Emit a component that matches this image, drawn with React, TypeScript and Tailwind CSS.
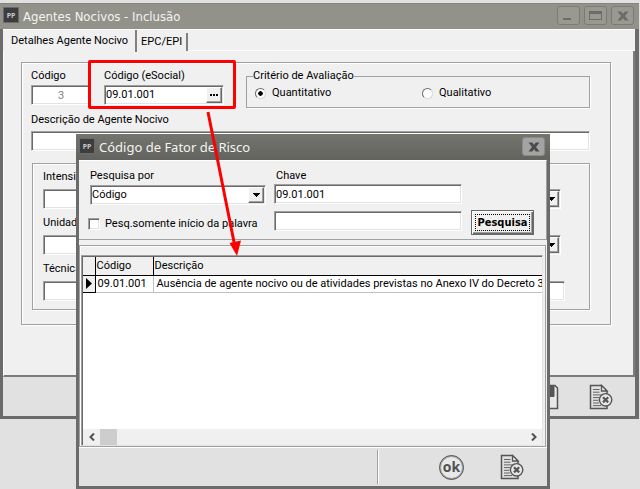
import type { ReactNode } from "react";

const sunken =
  "border border-t-[#a0a0a0] border-l-[#a0a0a0] border-r-white border-b-white bg-white shadow-[inset_1px_1px_0_#696969,inset_-1px_-1px_0_#e3e3e3]";
const raised =
  "border border-t-white border-l-white border-r-[#696969] border-b-[#696969] bg-[#f0f0f0] shadow-[inset_-1px_-1px_0_#a0a0a0]";
const etched = "border border-[#a0a0a0] shadow-[1px_1px_0_#fff,inset_1px_1px_0_#fff]";

function AppIcon() {
  return (
    <span
      aria-hidden="true"
      className="flex size-4 shrink-0 items-center justify-center border border-[#6a6a6a] bg-[#3d3d3f] font-['Noto_Sans'] text-[7px] leading-none font-bold text-[#c8c8c8]"
    >
      PP
    </span>
  );
}

function CloseGlyph() {
  return (
    <svg viewBox="0 0 12 10" className="h-2.5 w-3" fill="currentColor" aria-hidden="true">
      <path d="M0.5 0.5H4.2L6 2.8L7.8 0.5H11.5L8 5L11.5 9.5H7.8L6 7.2L4.2 9.5H0.5L4 5Z" />
    </svg>
  );
}

function TitleButton({ label, className, children }: { label: string; className: string; children: ReactNode }) {
  return (
    <button
      type="button"
      aria-label={label}
      className={"flex h-[19px] w-[23px] items-center justify-center rounded-[3px] border " + className}
    >
      {children}
    </button>
  );
}

function ComboArrow() {
  return (
    <span aria-hidden="true" className={"pointer-events-none flex w-4 shrink-0 items-center justify-center " + raised}>
      <svg viewBox="0 0 7 4" className="h-1 w-[7px]" shapeRendering="crispEdges">
        <path d="M0 0H7L3.5 4Z" />
      </svg>
    </span>
  );
}

function Combo({ id, options }: { id: string; options: string[] }) {
  return (
    <div className={"flex h-5 p-px " + sunken}>
      <select id={id} className="min-w-0 flex-1 appearance-none bg-transparent outline-none">
        {options.map((o) => (
          <option key={o}>{o}</option>
        ))}
      </select>
      <ComboArrow />
    </div>
  );
}

function CancelIcon() {
  return (
    <svg viewBox="0 0 24 26" className="h-[26px] w-6" fill="none" stroke="#555" aria-hidden="true">
      <path d="M12.5 1.5H1.5V24.5H18V22M12.5 1.5L18 7V10" strokeWidth="1.5" />
      <path d="M12.5 1.5V7H18Z" fill="#f2f2f2" strokeWidth="1.3" />
      <path d="M4 5.5H10.5M4 8.2H10.5M4 10.9H13M4 13.6H10.5M4 16.3H9.5M4 19H10M4 21.6H12" strokeWidth="0.9" />
      <circle cx="16.6" cy="15.8" r="6.2" fill="#e8e8e8" strokeWidth="1.4" />
      <path d="M14 13.2L19.2 18.4M19.2 13.2L14 18.4" strokeWidth="2.2" />
    </svg>
  );
}

function SaveIcon() {
  return (
    <svg viewBox="0 0 24 26" className="h-[26px] w-6" fill="none" stroke="#555" aria-hidden="true">
      <path d="M1.5 1.5H20L22.5 4V24.5H1.5Z" fill="#e8e8e8" strokeWidth="1.5" />
      <path d="M6 2H19V12.5H6Z" fill="#555" />
    </svg>
  );
}

function AgentWindow() {
  return (
    <section className="absolute top-[3px] right-px left-0 border-x-[3px] border-r-4 border-b-[3px] border-[#6b6b6b] bg-[#f0f0f0]">
      <header className="-mr-1 -ml-[3px] flex h-[26px] bg-[#92928b] px-[3px] pt-1 shadow-[inset_0_1px_0_#84847e]">
        <AppIcon />
        <h1 className="flex-1 pl-1 font-['DejaVu_Sans_Condensed'] text-[13px] leading-[19px] text-[#f4f4f0]">
          Agentes Nocivos - Inclusão
        </h1>
        <div className="-mt-px flex gap-1 pr-0.5">
          <TitleButton label="Minimizar" className="border-[#7b7b75] bg-[#999992] text-[#6d6d68]">
            <svg viewBox="0 0 12 10" className="h-2.5 w-3" fill="currentColor" aria-hidden="true">
              <path d="M0 7H8V9H0Z" />
            </svg>
          </TitleButton>
          <TitleButton label="Maximizar" className="border-[#7b7b75] bg-[#999992] text-[#6d6d68]">
            <svg viewBox="0 0 13 9" className="h-[9px] w-[13px]" fill="currentColor" aria-hidden="true">
              <path fillRule="evenodd" d="M0 0H13V9H0ZM1 3V8H12V3Z" />
            </svg>
          </TitleButton>
          <TitleButton label="Fechar" className="border-[#7b7b75] bg-[#999992] text-[#6d6d68]">
            <CloseGlyph />
          </TitleButton>
        </div>
      </header>

      <div role="tablist" className="flex h-[22px] items-start border-t border-white">
        <button
          type="button"
          role="tab"
          aria-selected="true"
          className="h-[22px] border-r-2 border-[#808080] pr-[7px] pb-px pl-2"
        >
          Detalhes Agente Nocivo
        </button>
        <button
          type="button"
          role="tab"
          aria-selected="false"
          className="mt-[3px] h-[18px] border-r-2 border-[#808080] px-1"
        >
          EPC/EPI
        </button>
        <div className="h-[21px] flex-1 border-b border-white" />
      </div>

      <div className="h-[326px] border-r-2 border-b-2 border-l border-l-white border-r-[#7c7c7c] border-b-[#7c7c7c] pt-[11px] pr-[22px] pl-[17px]">
        <div className={"pt-1.5 pr-5 pb-3.5 pl-[9px] " + etched}>
          <div className="flex">
            <div className="w-[60px]">
              <label htmlFor="codigo" className="mb-0.5 block">
                Código
              </label>
              <input
                id="codigo"
                defaultValue="3"
                readOnly
                className={"h-5 w-full text-center text-[#808080] outline-none " + sunken}
              />
            </div>
            <div className="ml-[13px] w-[120px]">
              <label htmlFor="esocial" className="mb-0.5 block">
                Código (eSocial)
              </label>
              <div className={"flex h-5 p-px " + sunken}>
                <input
                  id="esocial"
                  defaultValue="09.01.001"
                  className="min-w-0 flex-1 bg-transparent outline-none"
                />
                <button
                  type="button"
                  aria-label="Pesquisar código"
                  className={"flex w-4 items-center justify-center " + raised}
                >
                  <svg viewBox="0 0 8 2" className="h-0.5 w-2" aria-hidden="true">
                    <path d="M0 0H2V2H0ZM3 0H5V2H3ZM6 0H8V2H6Z" />
                  </svg>
                </button>
              </div>
            </div>
            <fieldset className="ml-[22px] h-[39px] flex-1 border border-[#a0a0a0] pl-2 shadow-[1px_1px_0_#fff]">
              <legend className="-ml-0.5">Critério de Avaliação</legend>
              <div className="grid grid-cols-2 pt-[3px]">
                <label className="flex items-center gap-1.5">
                  <input
                    type="radio"
                    name="criterio"
                    defaultChecked
                    className="size-[11px] appearance-none rounded-full border border-t-[#696969] border-l-[#696969] border-r-[#d8d8d8] border-b-[#d8d8d8] bg-white bg-[radial-gradient(circle,#000_2px,transparent_2.5px)]"
                  />
                  Quantitativo
                </label>
                <label className="flex items-center gap-1.5">
                  <input
                    type="radio"
                    name="criterio"
                    className="size-[11px] appearance-none rounded-full border border-t-[#696969] border-l-[#696969] border-r-[#d8d8d8] border-b-[#d8d8d8] bg-white"
                  />
                  Qualitativo
                </label>
              </div>
            </fieldset>
          </div>

          <label htmlFor="descricao" className="mt-[5px] mb-1 block">
            Descrição de Agente Nocivo
          </label>
          <input id="descricao" className={"block h-5 w-full outline-none " + sunken} />

          <div className={"mt-3 ml-px flex flex-col gap-[7px] pt-1.5 pr-6 pb-2 pl-2.5 " + etched}>
            <div className="pr-1">
              <label htmlFor="intensidade" className="mb-[5px] block">
                Intensidade
              </label>
              <Combo id="intensidade" options={[""]} />
            </div>
            <div className="pr-1">
              <label htmlFor="unidade" className="mb-[5px] block">
                Unidade
              </label>
              <Combo id="unidade" options={[""]} />
            </div>
            <div>
              <label htmlFor="tecnica" className="mb-[5px] block">
                Técnica
              </label>
              <input id="tecnica" className={"block h-5 w-full outline-none " + sunken} />
            </div>
          </div>
        </div>
      </div>

      <footer className="flex h-[39px] items-center justify-end gap-[30px] bg-[#e1e1e1] pr-[22px]">
        <button type="button" aria-label="Gravar">
          <SaveIcon />
        </button>
        <button type="button" aria-label="Cancelar">
          <CancelIcon />
        </button>
      </footer>
    </section>
  );
}

function RiskDialog() {
  return (
    <section
      role="dialog"
      aria-labelledby="risk-title"
      className="absolute top-[134px] right-[90px] left-[76px] border-x-[3px] border-b-[3px] border-[#6b6b6b] bg-[#f0f0f0]"
    >
      <header className="-mx-[3px] flex h-[26px] bg-linear-to-b from-[#74756f] to-[#62635e] px-[3px] pt-1">
        <AppIcon />
        <h2
          id="risk-title"
          className="flex-1 pl-1 font-['Noto_Sans'] text-[13px] leading-[19px] text-[#f4f4f0]"
        >
          Código de Fator de Risco
        </h2>
        <TitleButton label="Fechar" className="-mt-px mr-0.5 border-[#8a8a8a] bg-[#a3a3a3] text-[#4a4a4a]">
          <CloseGlyph />
        </TitleButton>
      </header>

      <form className="flex h-20 border-t border-r border-b border-t-white border-r-[#a0a0a0] border-b-[#a0a0a0] pt-2 pl-[11px]">
        <div className="w-44">
          <label htmlFor="por" className="mb-0.5 block">
            Pesquisa por
          </label>
          <Combo id="por" options={["Código", "Descrição"]} />
          <label className="mt-3 -ml-0.5 flex items-center gap-[5px] whitespace-nowrap">
            <input type="checkbox" className={"size-3 appearance-none " + sunken} />
            Pesq.somente início da palavra
          </label>
        </div>
        <div className="ml-2 flex-1">
          <label htmlFor="chave" className="mb-px block pl-0.5">
            Chave
          </label>
          <input id="chave" defaultValue="09.01.001" className={"block h-5 w-full pl-px outline-none " + sunken} />
          <input aria-label="Chave final" className={"mt-[7px] block h-5 w-full outline-none " + sunken} />
        </div>
        <button
          type="button"
          className="mt-[41px] mr-3 ml-[9px] h-[25px] w-[63px] border border-[#696969] bg-[#f0f0f0] p-[3px] font-['DejaVu_Sans_Condensed'] font-bold shadow-[inset_1px_1px_0_#fff,inset_-1px_-1px_0_#696969,inset_-2px_-2px_0_#a0a0a0]"
        >
          <span className="flex h-full items-center justify-center border border-dotted border-black">Pesquisa</span>
        </button>
      </form>

      <div className="mt-[5px] mr-px border border-[#a0a0a0] pt-[9px] pr-0.5 pl-px shadow-[inset_1px_1px_0_#fff]">
        <div className="flex h-[191px] flex-col border border-t-[#a0a0a0] border-l-[#a0a0a0] border-r-[#e3e3e3] border-b-[#e3e3e3] bg-white pt-px pl-px shadow-[inset_1px_1px_0_#696969]">
          <div className="flex-1 overflow-hidden">
            <table className="w-full table-fixed border-collapse text-left whitespace-nowrap">
              <thead className="bg-[#f0f0f0]">
                <tr className="h-[18px] border-b border-black">
                  <th className="w-3 border-r border-black" aria-label="Registro" />
                  <th className="w-[58px] border-r border-black p-0 pl-px font-normal">Código</th>
                  <th className="p-0 pl-px font-normal">Descrição</th>
                </tr>
              </thead>
              <tbody>
                <tr className="h-[17px] border-b border-[#c0c0c0]">
                  <td className="border-r border-b border-black bg-[#f0f0f0] p-0">
                    <svg viewBox="0 0 6 11" className="ml-[3px] block h-[11px] w-1.5" aria-hidden="true">
                      <path d="M0 0L6 5.5L0 11Z" />
                    </svg>
                  </td>
                  <td className="border-r border-[#c0c0c0] p-0 pl-0.5">09.01.001</td>
                  <td className="overflow-hidden p-0 pl-[3px]">
                    Ausência de agente nocivo ou de atividades previstas no Anexo IV do Decreto 3.048/1999
                  </td>
                </tr>
              </tbody>
            </table>
          </div>
          <div className="flex h-4 items-center bg-[#f0f0f0] text-[#505050]">
            <button type="button" aria-label="Rolar para a esquerda" className="flex w-[17px] justify-center">
              <svg viewBox="0 0 6 8" className="h-2 w-1.5" fill="none" stroke="currentColor" strokeWidth="2">
                <path d="M5 0.5L1.5 4L5 7.5" />
              </svg>
            </button>
            <div className="h-full w-[17px] bg-[#cdcdcd]" />
            <div className="flex-1" />
            <button type="button" aria-label="Rolar para a direita" className="flex w-[17px] justify-center">
              <svg viewBox="0 0 6 8" className="h-2 w-1.5" fill="none" stroke="currentColor" strokeWidth="2">
                <path d="M1 0.5L4.5 4L1 7.5" />
              </svg>
            </button>
          </div>
        </div>
      </div>

      <footer className="flex h-[39px] items-center justify-end border-t border-white bg-[#e1e1e1] pr-[23px]">
        <div className="mr-[60px] h-[34px] w-0.5 border-l border-[#a0a0a0] bg-white" />
        <button
          type="button"
          className="mr-9 flex size-[25px] items-center justify-center rounded-full border border-[#4c4c4c] bg-[#e8e8e8] pb-px font-['Open_Sans'] text-sm leading-none font-bold text-[#505050] shadow-[inset_0_0_0_1px_#a4a4a4]"
        >
          ok
        </button>
        <button type="button" aria-label="Cancelar">
          <CancelIcon />
        </button>
      </footer>
    </section>
  );
}

export default function App() {
  return (
    <main className="relative min-h-screen overflow-hidden bg-[#e1e1e1] font-['Roboto','Noto_Sans',sans-serif] text-[11px] leading-[14px] text-black">
      <AgentWindow />
      <RiskDialog />
      {/* callout from the eSocial code to the result grid */}
      <div className="pointer-events-none absolute top-[60px] left-[88px] h-[49px] w-[148px] rounded-[2px] border-3 border-[#fe0000]" />
      <svg
        viewBox="0 0 40 150"
        className="pointer-events-none absolute top-[108px] left-[203px] h-[150px] w-10"
        aria-hidden="true"
      >
        <path d="M5 4L32 139" stroke="#fe0000" strokeWidth="3" />
        <path d="M26.5 135L38 132.5L34 148Z" fill="#fe0000" />
      </svg>
    </main>
  );
}
